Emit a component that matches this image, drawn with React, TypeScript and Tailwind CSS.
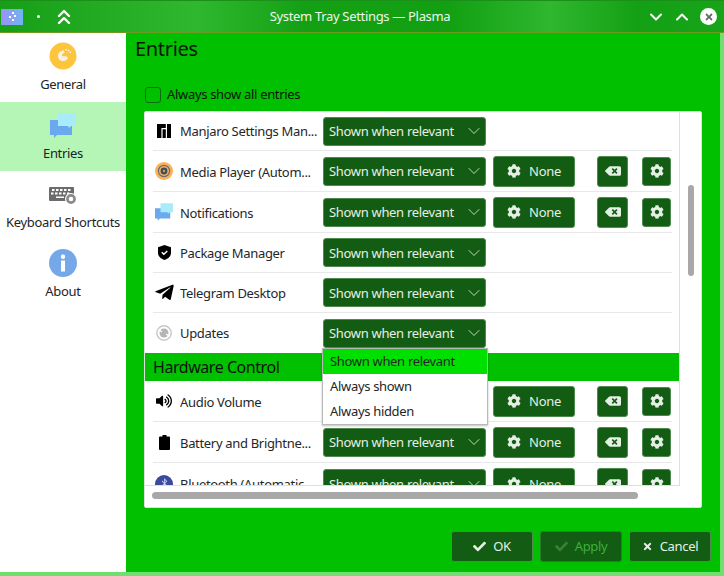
import React from "react";
import { FaCog, FaBackspace, FaTelegramPlane, FaVolumeUp, FaCheck, FaTimes, FaBluetoothB } from "react-icons/fa";
import { LuChevronDown, LuChevronsUp, LuChevronUp } from "react-icons/lu";

const Manjaro = () => (
  <svg width="14" height="14" viewBox="0 0 14 14" className="block"><path d="M0 0h8.800v4H4.400v10H0zM5.600 5.200h3.200V14H5.600zM10 0h4v14h-4z" fill="#000" /></svg>
);
const Media = () => (
  <svg width="18" height="18" viewBox="0 0 18 18" className="block">
    <circle cx="9" cy="9" r="9" fill="#fbb05a" />
    <circle cx="9" cy="9" r="6.200" fill="#6b6b6b" />
    <circle cx="9" cy="9" r="5" fill="#e8b272" />
    <circle cx="9" cy="9" r="3.400" fill="#4a4a4a" />
    <circle cx="9" cy="9" r="1.200" fill="#d8a060" />
  </svg>
);
const Chat = ({ w = 26, h = 25 }: { w?: number; h?: number }) => (
  <svg width={w} height={h} viewBox="0 0 26 25" className="block">
    <path d="M0 7h22v15H7l-3 3v-3H0z" fill="#6aa9ee" />
    <path d="M8 0h18v13h-5l-2 2-1-2H8z" fill="#a8ecfb" />
  </svg>
);
const Shield = () => (
  <svg width="13" height="15" viewBox="0 0 13 15" className="block">
    <path d="M6.500 0 13 2.200V8c0 3.500-3 5.800-6.500 7C3 13.800 0 11.500 0 8V2.200z" fill="#000" />
    <path d="M3.800 7.200l2 2 3.500-3.200" stroke="#fff" strokeWidth="1.500" fill="none" />
  </svg>
);
const Updates = () => (
  <svg width="16" height="16" viewBox="0 0 16 16" className="block">
    <circle cx="8" cy="8" r="7.200" fill="none" stroke="#c8c8c8" strokeWidth="1.500" />
    <circle cx="8" cy="8" r="4.500" fill="#b4b4b4" />
    <path d="M2.500 4.500l3.500 2.500M13.500 11.500L10 9" stroke="#fff" strokeWidth="1.300" />
  </svg>
);
const Battery = () => (
  <svg width="11" height="15" viewBox="0 0 11 15" className="block"><path d="M3.500 0h4v1.500h2.500a1 1 0 0 1 1 1V14a1 1 0 0 1-1 1H1a1 1 0 0 1-1-1V2.500a1 1 0 0 1 1-1h2.500z" fill="#000" /></svg>
);
const Bluetooth = () => (
  <span className="w-[18px] h-[18px] rounded-full bg-[#3b4a9c] flex items-center justify-center text-[#c6cdf0]"><FaBluetoothB size={11} /></span>
);
const General = () => (
  <svg width="28" height="28" viewBox="0 0 28 28" className="block">
    <circle cx="14" cy="14" r="13.500" fill="#fdc53c" />
    <path d="M15 8.500c-3.500 0-6 2.300-6 5.500 0 3 2.300 5 5.300 5 2.300 0 4-1.300 4.400-3 .1-1-.7-1.700-2-1.700h-2.200c-1 0-1.500-.6-1.500-1.300 0-1 1-1.900 2.500-2.100z" fill="#f5f1e8" />
    <circle cx="17" cy="7.800" r=".8" fill="#fff" /><circle cx="19.500" cy="8.500" r=".8" fill="#fff" /><circle cx="21.300" cy="10.300" r=".8" fill="#fff" />
  </svg>
);
const Keyboard = () => (
  <svg width="28" height="18" viewBox="0 0 28 18" className="block mt-[3px]">
    <rect x="0" y="0" width="25" height="14" rx="1" fill="#6b6b6b" />
    <g fill="#fff">
      {[3, 7, 11, 15, 19].map((x) => <rect key={x} x={x} y="2" width="2.500" height="2" />)}
      {[2, 6, 10, 14, 18].map((x) => <rect key={x} x={x} y="5.500" width="2.500" height="2" />)}
      <rect x="7" y="9.500" width="8" height="1.500" />
    </g>
    <circle cx="22" cy="12" r="6" fill="#fff" />
    <circle cx="22" cy="12" r="3.600" fill="none" stroke="#8a8a8a" strokeWidth="2.600" />
  </svg>
);
const About = () => (
  <svg width="28" height="28" viewBox="0 0 28 28" className="block">
    <circle cx="14" cy="14" r="14" fill="#75a8e8" />
    <circle cx="14" cy="7.800" r="2.200" fill="#fff" />
    <rect x="12" y="11.500" width="4" height="11" fill="#fff" />
  </svg>
);
const AppIcon = () => (
  <svg width="22" height="16" viewBox="0 0 22 16" className="block ml-[1px]">
    <defs>
      <linearGradient id="ai" x1="0" x2="1" y1="0" y2="0">
        <stop offset="0" stopColor="#9a92f8" />
        <stop offset="1" stopColor="#70b4ee" />
      </linearGradient>
    </defs>
    <rect width="22" height="16" fill="url(#ai)" />
    <g fill="#fff">
      <rect x="11" y="3" width="2" height="2" />
      <rect x="13" y="6" width="2" height="2" />
      <rect x="8" y="7" width="2" height="2" />
      <rect x="11" y="10" width="2" height="2" />
    </g>
  </svg>
);

const F = "[font-family:'Noto_Sans',sans-serif] tracking-[-0.32px]";

function Side({ icon, label, active }: { icon: React.ReactNode; label: string; active?: boolean }) {
  return (
    <div className={`h-[69px] flex flex-col items-center pt-[9px] ${active ? "bg-[#b5f5b5]" : ""}`}>
      <div className="h-[28px] flex items-center justify-center">{icon}</div>
      <div className="mt-[5px] text-[13px] leading-[18px] text-[#1f2326] whitespace-nowrap">{label}</div>
    </div>
  );
}

const btn = "bg-[#135c13] border border-[#4e8a4e] rounded-[3px] text-[#e6efe6] flex items-center shrink-0";

function Combo() {
  return (
    <div className={`${btn} w-[163px] h-[29px] pl-[5px] pr-[1px] justify-between text-[13px]`}>
      <span className="whitespace-nowrap pt-[2px]">Shown when relevant</span>
      <LuChevronDown size={20} strokeWidth={1} />
    </div>
  );
}

function Row({ icon, label, extras, last, h = 40 }: { icon: React.ReactNode; label: string; extras?: boolean; last?: boolean; h?: number }) {
  return (
    <div className={`ml-[8px] mr-[7px] flex items-center shrink-0 ${last ? "" : "border-b border-[#e8e8e8]"}`} style={{ height: h }}>
      <div className="w-[22px] flex justify-center mr-[5px] shrink-0">{icon}</div>
      <div className={`w-[143px] shrink-0 overflow-hidden text-[13px] text-[#232629] whitespace-nowrap ${extras ? "pt-[3px]" : "pt-[2px]"}`}>{label}</div>
      <Combo />
      {extras && (
        <>
          <div className={`${btn} w-[82px] h-[31px] ml-[7px] justify-center gap-[8px] text-[13px]`}><FaCog size={14} /><span className="pt-[2px]">None</span></div>
          <div className={`${btn} w-[31px] h-[31px] ml-[22px] justify-center`}><FaBackspace size={16} /></div>
          <div className={`${btn} w-[29px] h-[29px] ml-[14px] justify-center`}><FaCog size={14} /></div>
        </>
      )}
    </div>
  );
}

export default function App() {
  return (
    <div className={`w-[724px] h-[576px] overflow-hidden flex flex-col bg-[#00c000] relative ${F}`}>
      <div className="h-[33px] shrink-0 relative flex items-center border-b border-[#6f9a22] border-t-[#1a8f1a] border-t bg-[linear-gradient(90deg,#169f16_0%,#2fb82f_27%,#14a014_42%,#12a012_62%,#2fb72f_76%,#14a014_88%,#18a418_100%)] text-white">
        <AppIcon />
        <div className="w-[3px] h-[3px] rounded-full bg-white ml-[14px]" />
        <LuChevronsUp size={24} strokeWidth={2.400} className="ml-[12px]" />
        <div className="flex-1 text-center text-[13px] text-[#eef6ee] -ml-[2px]">System Tray Settings — Plasma</div>
        <LuChevronDown size={20} strokeWidth={2.400} className="mr-[6px]" />
        <LuChevronUp size={20} strokeWidth={2.400} className="mr-[8px]" />
        <div className="w-[17px] h-[17px] rounded-full bg-white flex items-center justify-center text-[#666] mr-[7px]"><FaTimes size={10} /></div>
      </div>
      <div className="flex-1 flex min-h-0">
        <div className="w-[126px] shrink-0 bg-white">
          <Side icon={<General />} label="General" />
          <Side icon={<Chat />} label="Entries" active />
          <Side icon={<Keyboard />} label="Keyboard Shortcuts" />
          <Side icon={<About />} label="About" />
        </div>
        <div className="flex-1 flex flex-col min-w-0 border-r-[4px] border-[#6fe06f]">
          <div className="pl-[9px] h-[31px] flex items-center text-[20px] text-[#0a140a]">Entries</div>
          <div className="ml-[19px] mt-[22px] flex items-center gap-[6px] h-[18px] text-[13px] text-[#0a140a]">
            <div className="w-[16px] h-[16px] border border-[#0f6a0f] rounded-[3px]" />
            <span>Always show all entries</span>
          </div>
          <div className="ml-[18px] mt-[7px] w-[558px] h-[397px] bg-white rounded-[2px] border border-[#e0e0e0] flex flex-col relative">
            <div className="flex-1 flex min-h-0">
              <div className="flex-1 overflow-hidden flex flex-col border-r border-[#dedede] border-b min-w-0">
                <Row icon={<Manjaro />} label="Manjaro Settings Man..." h={39} />
                <Row icon={<Media />} label="Media Player (Autom..." h={41} extras />
                <Row icon={<Chat w={18} h={18} />} label="Notifications" h={41} extras />
                <Row icon={<Shield />} label="Package Manager" />
                <Row icon={<FaTelegramPlane size={21} color="#000" />} label="Telegram Desktop" />
                <Row icon={<Updates />} label="Updates" last />
                <div className="h-[28px] shrink-0 bg-[#00c000] flex items-center pl-[8px] text-[16px] tracking-[-0.45px] text-[#0a140a]">Hardware Control</div>
                <Row icon={<FaVolumeUp size={16} color="#000" />} label="Audio Volume" h={41} extras />
                <Row icon={<Battery />} label="Battery and Brightne..." h={41} extras />
                <Row icon={<Bluetooth />} label="Bluetooth (Automatic..." h={41} extras last />
              </div>
              <div className="w-[21px] shrink-0 flex justify-center">
                <div className="w-[6px] h-[91px] rounded-full bg-[#a8a8a8] mt-[73px]" />
              </div>
            </div>
            <div className="h-[21px] shrink-0 pl-[7px] pt-[6px]">
              <div className="w-[486px] h-[7px] rounded-full bg-[#a8a8a8]" />
            </div>
            <div className="absolute left-[177px] top-[236px] w-[166px] h-[77px] bg-white border border-[#b8b8b8] shadow-[0_1px_2px_rgba(0,0,0,0.25)] text-[13px] text-[#232629] z-10">
              <div className="h-[25px] bg-[#00e000] pl-[7px] flex items-center">Shown when relevant</div>
              <div className="h-[25px] pl-[7px] flex items-center">Always shown</div>
              <div className="h-[25px] pl-[7px] flex items-center">Always hidden</div>
            </div>
          </div>
          <div className="flex justify-end gap-[7px] pr-[9px] mt-[23px]">
            <div className={`${btn} w-[82px] h-[31px] justify-center gap-[7px] text-[13px]`}><FaCheck size={13} /><span>OK</span></div>
            <div className={`${btn} w-[82px] h-[31px] justify-center gap-[7px] text-[13px] !text-[#3fae3f] !border-[#2a7a2a]`}><FaCheck size={13} className="text-[#3d7d3d]" /><span>Apply</span></div>
            <div className={`${btn} w-[82px] h-[31px] justify-center gap-[7px] text-[13px]`}><FaTimes size={11} /><span>Cancel</span></div>
          </div>
        </div>
      </div>
      <div className="h-[4px] shrink-0 bg-[#6fe06f]" />
    </div>
  );
}
